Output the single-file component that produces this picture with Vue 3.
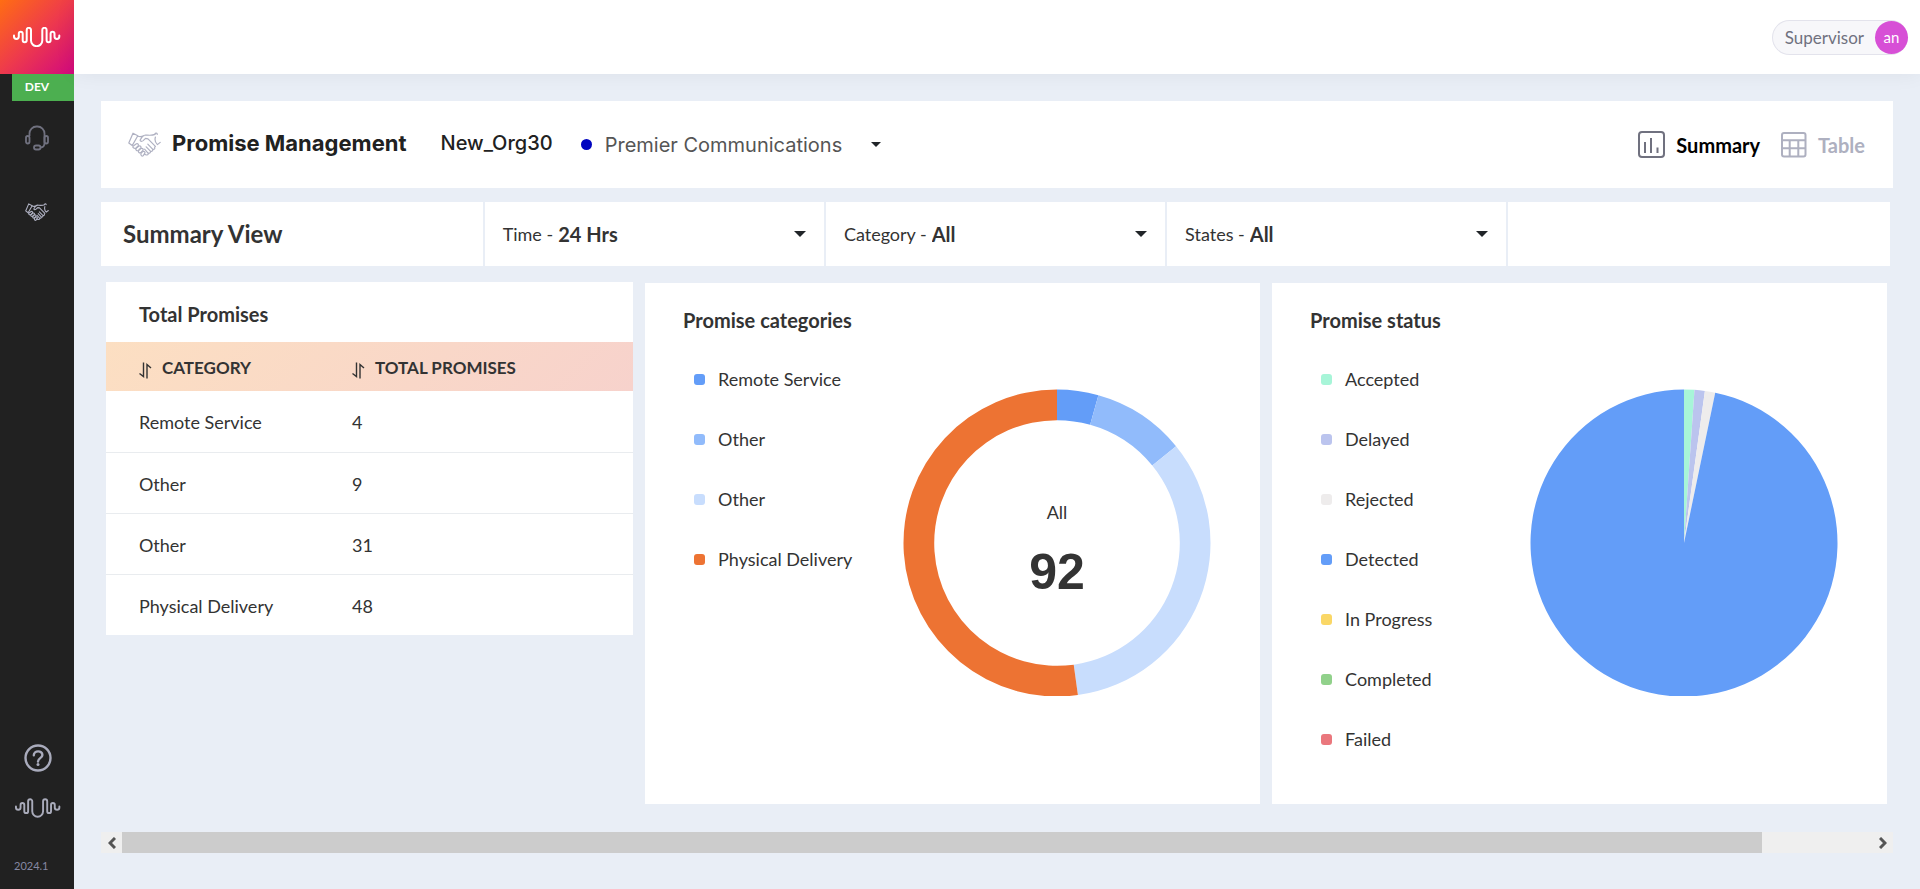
<script setup>
import { ref } from 'vue'

const wavePath =
  'M1 8.5v1a2.4 2.4 0 0 0 4.8 0V6.8a1.95 1.95 0 0 1 3.9 0v6.5a2 2 0 0 0 4 0V3a2.15 2.15 0 0 1 4.3 0v10.5a5.65 5.65 0 0 0 11.3 0V3a2.15 2.15 0 0 1 4.3 0v10.3a2 2 0 0 0 4 0V6.8a1.95 1.95 0 0 1 3.9 0v2.7a2.4 2.4 0 0 0 4.8 0v-1'

const shakePaths = [
  'M5 1.2 9.8 3.8 4.2 13.6.8 11z',
  'M9.8 4.2c2.2.8 4 .6 6.2-.6M27 2.4c-3.2 1.4-6.5.8-9.5.6-1.6.2-2.7 1-3.5 2.2l-1.8 2.7c-.4 1.2 1.4 2 3 .7l2.3-2.2 2.5.4 7.4 7.6',
  'M27 2c.4-1.3 2.4-1 2.2.4M27.4 5c-.8 2.8.2 6 2 7.600l2.800-2.200',
  'M5 14.200l3.400-2.400c1.500-.6 2.600.8 1.700 2l-2 2.200c-1.600 1.200-3.800-.4-3.100-1.800z',
  'M8 16.400l3-2.400c1.400-.5 2.600.8 1.800 2l-2.400 2.400c-1.500 1-3.200-.6-2.400-2z',
  'M10.600 18.600l2.600-2.200c1.400-.5 2.500.8 1.700 2l-2 2.200c-1.500 1-3.100-.6-2.300-2z',
  'M13.200 21l1.800-1.600c1.400-.4 2.500.8 1.700 2l-1.500 2.400c-1.500.9-2.900-.8-2-2.800z',
  'M16.600 22.400l2 .6c1.600.2 2.200-1.200 1.200-2.200l-3.200-3.600M20 21c1.600.7 3-.5 2.400-1.800l-4.200-4.400M22.500 19.300c1.600.5 2.800-.8 2.100-2.100l-4.800-5M24.700 17.300c1.600.4 2.700-.9 1.900-2.200',
]

const filters = [
  { id: 'time', label: 'Time', options: ['24 Hrs', '7 Days', '30 Days'] },
  { id: 'category', label: 'Category', options: ['All'] },
  { id: 'states', label: 'States', options: ['All'] },
]
const selected = ref({ time: '24 Hrs', category: 'All', states: 'All' })

const categories = [
  { name: 'Remote Service', total: 4, color: '#639df8' },
  { name: 'Other', total: 9, color: '#91bbfb' },
  { name: 'Other', total: 31, color: '#c8ddfd' },
  { name: 'Physical Delivery', total: 48, color: '#ed7333' },
]
const statuses = [
  { name: 'Accepted', total: 1, color: '#a7f5d8' },
  { name: 'Delayed', total: 1, color: '#bbc4ee' },
  { name: 'Rejected', total: 1, color: '#eeecec' },
  { name: 'Detected', total: 89, color: '#639df8' },
  { name: 'In Progress', total: 0, color: '#fad766' },
  { name: 'Completed', total: 0, color: '#91d18b' },
  { name: 'Failed', total: 0, color: '#ea777d' },
]
const grandTotal = categories.reduce((sum, c) => sum + c.total, 0)

function slices(items, outer, inner) {
  const total = items.reduce((sum, i) => sum + i.total, 0)
  const c = 154
  const at = (r, a) => `${(c + r * Math.sin(a)).toFixed(2)} ${(c - r * Math.cos(a)).toFixed(2)}`
  let angle = 0
  return items
    .filter((i) => i.total > 0)
    .map((i) => {
      const start = angle
      const end = (angle += (i.total / total) * Math.PI * 2)
      const large = end - start > Math.PI ? 1 : 0
      return {
        color: i.color,
        d: `M${at(outer, start)}A${outer} ${outer} 0 ${large} 1 ${at(outer, end)}L${at(inner, end)}A${inner} ${inner} 0 ${large} 0 ${at(inner, start)}Z`,
      }
    })
}

const charts = [
  { title: 'Promise categories', items: categories, slices: slices(categories, 153.5, 122.8), total: grandTotal },
  { title: 'Promise status', items: statuses, slices: slices(statuses, 153.5, 0), total: null },
]
</script>

<template>
  <div class="app">
    <aside class="sidebar">
      <a class="brand" href="#" aria-label="Home">
        <svg class="wave" viewBox="0 0 48 20"><path :d="wavePath" /></svg>
      </a>
      <div class="env">DEV</div>
      <nav class="menu">
        <a href="#" aria-label="Support">
          <svg class="headset" viewBox="0 0 24 26">
            <path d="M4.500 11V8.500a7 7 0 0 1 7-7h1a7 7 0 0 1 7 7V18c0 3-1.500 4.500-4 4.500" />
            <rect x="1" y="11" width="3.500" height="7.500" rx="1.700" />
            <rect x="19.500" y="11" width="3.500" height="7.500" rx="1.700" />
            <rect x="9" y="20.500" width="6.500" height="4" rx="2" />
          </svg>
        </a>
        <a href="#" aria-label="Promises">
          <svg class="shake small" viewBox="0 0 33 25"><path v-for="d in shakePaths" :key="d" :d="d" /></svg>
        </a>
      </nav>
      <div class="foot">
        <a href="#" aria-label="Help">
          <svg class="help" viewBox="0 0 28 28">
            <circle cx="14" cy="14" r="12.500" />
            <path d="M9.800 11.300c0-5.200 8.600-5.200 8.600-.3 0 3.300-4.400 3-4.400 6.500" />
            <circle class="help-dot" cx="14" cy="20.500" r="1.500" />
          </svg>
        </a>
        <svg class="wave muted" viewBox="0 0 48 20"><path :d="wavePath" /></svg>
        <div class="version">2024.1</div>
      </div>
    </aside>

    <div class="page">
      <header class="topbar">
        <button class="user" type="button">
          <span class="role">Supervisor</span>
          <span class="avatar">an</span>
        </button>
      </header>

      <main class="content">
        <section class="titlebar">
          <svg class="shake" viewBox="0 0 33 25"><path v-for="d in shakePaths" :key="d" :d="d" /></svg>
          <h1>Promise Management</h1>
          <span class="org">New_Org30</span>
          <div class="account">
            <i class="dot"></i>
            <select aria-label="Account">
              <option>Premier Communications</option>
            </select>
            <svg class="caret thin" viewBox="0 0 12 6"><path d="M0 0h12L6 6z" /></svg>
          </div>
          <div class="views">
            <button class="view active" type="button">
              <svg viewBox="0 0 27 27">
                <rect x="1" y="1" width="25" height="25" rx="3" />
                <path d="M7 11v11M13 7v15M19.500 16.500V22" />
              </svg>
              Summary
            </button>
            <button class="view" type="button">
              <svg viewBox="0 0 27 27">
                <rect x="2" y="2" width="23.500" height="23.500" rx="2" />
                <path d="M2 9.300h23.500M2 17.300h23.500M9.700 9.300v16.200M18.300 9.300v16.200" />
              </svg>
              Table
            </button>
          </div>
        </section>

        <section class="filters">
          <h2>Summary View</h2>
          <div v-for="f in filters" :key="f.id" class="filter">
            <label :for="f.id">{{ f.label }} -</label>
            <select :id="f.id" v-model="selected[f.id]">
              <option v-for="o in f.options" :key="o">{{ o }}</option>
            </select>
            <svg class="caret" viewBox="0 0 12 6"><path d="M0 0h12L6 6z" /></svg>
          </div>
          <div class="filter"></div>
        </section>

        <section class="cards">
          <article class="card table-card">
            <h3 class="table-title">Total Promises</h3>
            <table>
              <thead>
                <tr>
                  <th v-for="h in ['CATEGORY', 'TOTAL PROMISES']" :key="h" scope="col">
                    <svg class="sort" viewBox="0 0 13 17">
                      <path d="M4.500.5v14L.5 11.500M8 16.500v-14l4 3.500" />
                    </svg>
                    <span>{{ h }}</span>
                  </th>
                </tr>
              </thead>
              <tbody>
                <tr v-for="(c, i) in categories" :key="i">
                  <td>{{ c.name }}</td>
                  <td>{{ c.total }}</td>
                </tr>
              </tbody>
            </table>
          </article>

          <article v-for="chart in charts" :key="chart.title" class="card chart-card">
            <h3>{{ chart.title }}</h3>
            <div class="chart-body">
              <ul class="legend">
                <li v-for="(item, i) in chart.items" :key="i">
                  <i class="swatch" :style="{ background: item.color }"></i>{{ item.name }}
                </li>
              </ul>
              <svg class="chart" viewBox="0 0 308 307" role="img" :aria-label="chart.title">
                <path v-for="s in chart.slices" :key="s.d" :d="s.d" :fill="s.color" />
                <template v-if="chart.total">
                  <text class="chart-label" x="154" y="130">All</text>
                  <text class="chart-total" x="154" y="200">{{ chart.total }}</text>
                </template>
              </svg>
            </div>
          </article>
        </section>

        <div class="scroller">
          <button type="button" aria-label="Scroll left">
            <svg viewBox="0 0 8 12"><path d="M7 1 2 6l5 5" /></svg>
          </button>
          <div class="track"><div class="thumb"></div></div>
          <button type="button" aria-label="Scroll right">
            <svg viewBox="0 0 8 12"><path d="M1 1l5 5-5 5" /></svg>
          </button>
        </div>
      </main>
    </div>
  </div>
</template>

<style>
body {
  margin: 0;
  background: #e9eef6;
}
</style>

<style scoped>
* {
  box-sizing: border-box;
}
.app {
  display: flex;
  min-height: 100vh;
  font-family: Lato, 'Liberation Sans', sans-serif;
  font-size: 18px;
  color: #333;
}
h1, h2, h3, ul {
  margin: 0;
  padding: 0;
}
button, select {
  font: inherit;
  color: inherit;
  border: 0;
  padding: 0;
  background: none;
  appearance: none;
  cursor: pointer;
}
svg {
  display: block;
  flex: none;
}

.sidebar {
  display: flex;
  flex-direction: column;
  flex: none;
  width: 74px;
  background: #212121;
}
.brand {
  display: flex;
  align-items: center;
  justify-content: center;
  height: 74px;
  background: linear-gradient(135deg, #ff6d13, #ee3a4c 50%, #d1087f);
}
.wave {
  width: 48px;
  height: 20px;
  fill: none;
  stroke: #fff;
  stroke-width: 2;
  stroke-linecap: round;
}
.wave.muted {
  width: 46px;
  stroke: #a9abba;
}
.env {
  margin-left: 12px;
  padding: 0 12px 2px 0;
  background: #4caf50;
  color: #fff;
  font-size: 12px;
  font-weight: 700;
  line-height: 25px;
  text-align: center;
}
.menu {
  display: flex;
  flex-direction: column;
  align-items: center;
}
.menu a {
  display: flex;
  align-items: center;
  height: 74px;
}
.headset {
  width: 24px;
  height: 26px;
  fill: none;
  stroke: #70717f;
  stroke-width: 1.8;
}
.shake {
  width: 33px;
  height: 25px;
  fill: none;
  stroke: #afb1c2;
  stroke-width: 1.2;
  stroke-linecap: round;
  stroke-linejoin: round;
}
.shake.small {
  width: 24px;
  height: 18px;
  stroke-width: 1.5;
}
.foot {
  display: flex;
  flex-direction: column;
  align-items: center;
  margin-top: auto;
  padding-left: 2px;
  gap: 26px;
}
.help {
  width: 28px;
  height: 28px;
  fill: none;
  stroke: #a9abbc;
  stroke-width: 2.4;
  stroke-linecap: round;
}
.help .help-dot {
  fill: #a9abbc;
  stroke: none;
}
.version {
  align-self: flex-start;
  padding: 12px 0 13px 12px;
  color: #8688a3;
  font-size: 11px;
  line-height: 20px;
}

.page {
  flex: 1;
  min-width: 0;
}
.topbar {
  display: flex;
  align-items: center;
  justify-content: flex-end;
  height: 74px;
  padding-right: 12px;
  background: #fff;
  box-shadow: 0 0 20px rgba(0, 0, 0, 0.06);
}
.user {
  display: flex;
  align-items: center;
  gap: 11px;
  padding-left: 12px;
  border: 1px solid #e3e3ec;
  border-right: 0;
  border-radius: 18px;
  background: #f7f7fa;
}
.role {
  color: #70717f;
  font-size: 17px;
}
.avatar {
  width: 33px;
  border-radius: 50%;
  background: #d74fd6;
  color: #fff;
  font-size: 15px;
  line-height: 33px;
}

.content {
  padding: 27px;
}
.titlebar {
  display: flex;
  align-items: center;
  height: 87px;
  padding: 0 28px 0 27px;
  background: #fff;
  font-family: Inter, 'Open Sans', sans-serif;
}
h1, .org {
  padding-bottom: 4px;
  color: #212121;
  line-height: 32px;
}
h1 {
  margin-left: 11px;
  font-size: 22px;
  font-weight: 700;
}
.org {
  margin-left: 34px;
  font-size: 20px;
  font-weight: 500;
}
.account {
  display: flex;
  align-items: center;
  margin-left: 28px;
  color: #555;
}
.account select {
  margin: 0 28px 0 13px;
  font-size: 20px;
  font-weight: 400;
}
.dot {
  width: 11px;
  height: 11px;
  border-radius: 50%;
  background: #0004c0;
}
.caret {
  width: 12px;
  height: 6px;
  fill: #212529;
}
.caret.thin {
  width: 10px;
  height: 5px;
}
.views {
  display: flex;
  gap: 20px;
  margin-left: auto;
  font-family: Lato, sans-serif;
}
.view {
  display: flex;
  align-items: center;
  gap: 11px;
  color: #aeb0c0;
  font-size: 20px;
  font-weight: 700;
}
.view.active {
  color: #000;
}
.view svg {
  width: 27px;
  height: 27px;
  fill: none;
  stroke: #aeb0c0;
  stroke-width: 2;
}
.view.active svg {
  stroke: #70717f;
}

.filters {
  display: grid;
  grid-template-columns: 9fr 8fr 8fr 8fr 9fr;
  gap: 2px;
  margin: 14px 3px 0 0;
}
h2 {
  padding-left: 22px;
  background: #fff;
  font-size: 24px;
  font-weight: 700;
  line-height: 64px;
}
.filter {
  display: flex;
  align-items: center;
  gap: 5px;
  padding: 0 18px;
  background: #fff;
}
.filter select {
  flex: 1;
  font-size: 20px;
  font-weight: 700;
}

.cards {
  display: grid;
  grid-template-columns: 6fr 7fr 7fr;
  gap: 12px;
  margin: 16px 6px 0 5px;
}
.card {
  background: #fff;
}
.table-card {
  align-self: start;
}
h3 {
  font-size: 20px;
  font-weight: 700;
  line-height: 24px;
}
.table-title {
  padding: 20px 33px 16px;
}
table {
  width: 100%;
  border-collapse: collapse;
  table-layout: fixed;
}
thead {
  background: linear-gradient(135deg, #fcdfc2, #f7d2cc);
}
th, td {
  padding: 2px 0 0 33px;
  text-align: left;
}
th:first-child, td:first-child {
  width: 213px;
}
th {
  height: 49px;
  font-size: 17px;
}
th span {
  padding-left: 10px;
}
.sort {
  display: inline-block;
  width: 13px;
  height: 17px;
  vertical-align: -5px;
  fill: none;
  stroke: #333;
  stroke-width: 1.4;
}
td {
  height: 61px;
}
tr + tr td {
  border-top: 1px solid #e9ecef;
}

.chart-card {
  margin-top: 1px;
  padding: 25px 49px 35px 38px;
}
.chart-body {
  display: flex;
  justify-content: space-between;
  margin-top: 17px;
}
.legend {
  padding-left: 11px;
  list-style: none;
}
.legend li {
  display: flex;
  align-items: center;
  gap: 13px;
  height: 60px;
  white-space: nowrap;
}
.swatch {
  width: 11px;
  height: 11px;
  border-radius: 3px;
}
.chart {
  width: 308px;
  height: 307px;
  margin-top: 40px;
}
.chart-label, .chart-total {
  fill: #333;
  text-anchor: middle;
}
.chart-total {
  font-family: 'Liberation Sans', sans-serif;
  font-size: 50px;
  font-weight: 700;
}

.scroller {
  display: flex;
  height: 21px;
  margin-top: 28px;
  background: #efefef;
}
.scroller button {
  display: flex;
  align-items: center;
  justify-content: center;
  width: 21px;
}
.scroller svg {
  width: 8px;
  height: 12px;
  fill: none;
  stroke: #555;
  stroke-width: 3;
}
.track {
  flex: 1;
}
.thumb {
  width: 93.7%;
  height: 100%;
  background: #cccccc;
}
</style>
